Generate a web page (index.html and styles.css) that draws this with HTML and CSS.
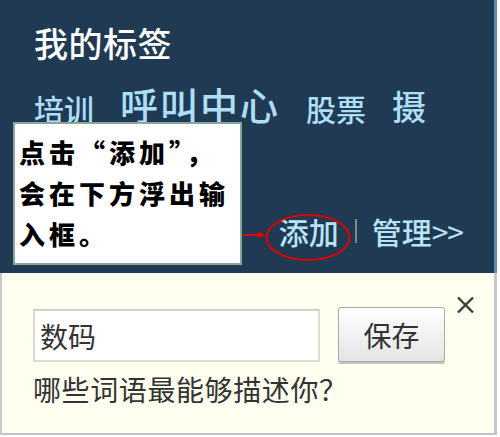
FILE: index.html
```html
<!DOCTYPE html>
<html lang="zh-CN">
<head>
<meta charset="utf-8">
<title>我的标签</title>
<link rel="stylesheet" href="styles.css">
</head>
<body>
<div class="shot">
  <div class="top">
    <div class="title">我的标签</div>
    <div class="tags">
      <span class="tag t30">培训</span>
      <span class="tag t38">呼叫中心</span>
      <span class="tag t30">股票</span>
      <span class="tag t34">摄</span>
    </div>
    <div class="links">
      <span class="link">添加</span>
      <span class="sep"></span>
      <span class="link">管理<span class="gt">&gt;&gt;</span></span>
    </div>
    <div class="tip">点击“添加”，<br>会在下方浮出输<br>入框。</div>
    <svg class="mark" width="120" height="56" viewBox="0 0 120 56">
      <line x1="3" y1="25" x2="21" y2="25" stroke="#e00000" stroke-width="2"/>
      <polygon points="26,25 18,21.5 18,28.5" fill="#e00000"/>
      <ellipse cx="68" cy="27.5" rx="41.5" ry="22.5" fill="none" stroke="#e00000" stroke-width="2"/>
    </svg>
  </div>
  <div class="panel">
    <div class="row">
      <div class="field">数码</div>
      <div class="btn">保存</div>
    </div>
    <div class="question">哪些词语最能够描述你？</div>
    <svg class="close" width="21" height="20" viewBox="0 0 21 20">
      <line x1="3" y1="2.5" x2="18" y2="17.5" stroke="#3d3d3d" stroke-width="2.4"/>
      <line x1="18" y1="2.5" x2="3" y2="17.5" stroke="#3d3d3d" stroke-width="2.4"/>
    </svg>
  </div>
</div>
</body>
</html>
```
FILE: styles.css
```css
html, body {
  margin: 0;
  padding: 0;
  background: #ffffff;
}

.shot {
  width: 500px;
  height: 437px;
  font-family: "Noto Sans CJK SC", "Noto Sans", sans-serif;
}

.top {
  position: relative;
  box-sizing: border-box;
  width: 497px;
  height: 273px;
  background: #1f3a52;
  border-right: 3px solid #5d8cb6;
  padding: 26px 0 0 34px;
  display: flex;
  flex-direction: column;
}

.title {
  font-size: 34px;
  line-height: 34px;
  height: 34px;
  letter-spacing: 0.5px;
  font-weight: 500;
  color: #ffffff;
}

.tags {
  display: flex;
  align-items: flex-end;
  column-gap: 26px;
  margin-top: 25px;
  height: 38px;
  color: #aedff9;
  font-weight: 500;
}

.tag {
  line-height: 1;
  white-space: nowrap;
}

.t30 { font-size: 30px; }
.t34 { font-size: 34px; }
.t38 { font-size: 38px; letter-spacing: 2px; }

.links {
  display: flex;
  justify-content: flex-end;
  align-items: center;
  margin-top: 93px;
  padding-right: 31px;
  font-size: 30px;
  line-height: 30px;
  height: 30px;
  font-weight: 500;
  color: #b9e3f8;
}

.link {
  white-space: nowrap;
}

.gt {
  font-size: 30px;
  font-weight: 400;
  letter-spacing: -1px;
}

.sep {
  display: block;
  width: 2px;
  height: 24px;
  margin: 0 15px 0 16px;
  background: #7d8f76;
}

.tip {
  position: absolute;
  left: 13px;
  top: 122px;
  box-sizing: border-box;
  width: 229px;
  height: 143px;
  border: 2px solid #86a89c;
  background: #ffffff;
  padding: 7px 0 0 4px;
  font-size: 26px;
  line-height: 41px;
  font-weight: 900;
  letter-spacing: 4px;
  color: #000000;
  white-space: nowrap;
}

.mark {
  position: absolute;
  left: 240px;
  top: 210px;
}

.panel {
  position: relative;
  box-sizing: border-box;
  width: 497px;
  height: 162px;
  background: #fffff0;
  border-left: 2px solid #c9c9c9;
  border-right: 3px solid #c6c6c6;
  border-bottom: 2px solid #c4c4c4;
  padding: 34px 0 0 31px;
}

.row {
  display: flex;
  align-items: flex-end;
  column-gap: 18px;
}

.field {
  box-sizing: border-box;
  width: 287px;
  height: 53px;
  border: 2px solid #dcdcd2;
  border-top-color: #cfcfc6;
  background: #ffffff;
  padding-left: 5px;
  display: flex;
  align-items: center;
  font-size: 28px;
  color: #333333;
}

.btn {
  box-sizing: border-box;
  width: 107px;
  height: 55px;
  border: 1px solid #a9a9a9;
  border-radius: 3px;
  background: linear-gradient(#ffffff, #e4e4e4);
  box-shadow: 0 2px 0 #c2c2c2;
  display: flex;
  align-items: center;
  justify-content: center;
  font-size: 28px;
  color: #333333;
}

.question {
  margin-top: 13px;
  font-size: 28px;
  line-height: 28px;
  letter-spacing: 0.6px;
  color: #333333;
  white-space: nowrap;
}

.close {
  position: absolute;
  left: 453px;
  top: 22px;
}
```
